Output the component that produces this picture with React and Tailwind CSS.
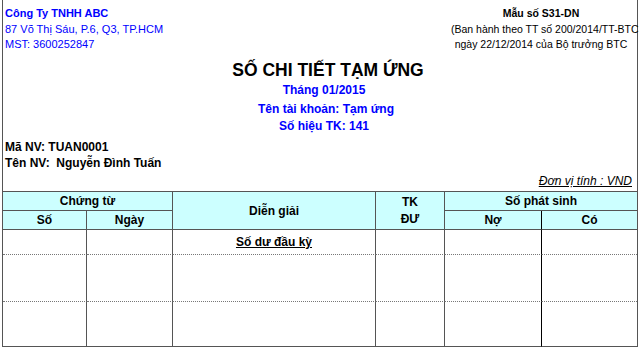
import React from "react";

const F = { fontFamily: '"Liberation Sans", Arial, sans-serif' };

export default function App() {
  const hc = "flex items-center justify-center text-center bg-[#ccffff] border-[#555] text-[12px] font-bold text-black";
  const bc = "border-[#555]";
  return (
    <div className="w-[640px] h-[347px] bg-white overflow-hidden" style={F}>
      <div className="ml-[2px] w-[636px] h-[347px] border-x border-[#555] flex flex-col">
        {/* top header */}
        <div className="flex justify-between pt-[5px]">
          <div className="pl-[2px] text-[#0000ff]">
            <div className="h-[17px] leading-[17px] text-[11px] font-bold">Công Ty TNHH ABC</div>
            <div className="h-[15px] leading-[15px] text-[11px]">87 Võ Thị Sáu, P.6, Q3, TP.HCM</div>
            <div className="h-[14px] leading-[14px] text-[11px]">MST: 3600252847</div>
          </div>
          <div className="w-[192px] text-center text-black">
            <div className="h-[17px] leading-[17px] text-[10.5px] font-bold">Mẫu số S31-DN</div>
            <div className="h-[15px] leading-[15px] text-[10.5px] pl-[6px] whitespace-nowrap">(Ban hành theo TT số 200/2014/TT-BTC</div>
            <div className="h-[14px] leading-[14px] text-[10.5px] whitespace-nowrap">ngày 22/12/2014 của Bộ trưởng BTC</div>
          </div>
        </div>
        <div className="mt-[9px] h-[21px] leading-[21px] text-center text-[17.5px] font-bold text-black pl-[16px]">SỐ CHI TIẾT TẠM ỨNG</div>
        <div className="h-[19px] leading-[19px] text-center text-[12px] font-bold text-[#0000ff] pl-[8px]">Tháng 01/2015</div>
        <div className="h-[18px] leading-[18px] text-center text-[12px] font-bold text-[#0000ff] pl-[12px]">Tên tài khoản: Tạm ứng</div>
        <div className="h-[17px] leading-[17px] text-center text-[12px] font-bold text-[#0000ff] pl-[8px]">Số hiệu TK: 141</div>
        <div className="mt-[4px] h-[16px] leading-[16px] pl-[2px] text-[12px] font-bold text-black">Mã NV: TUAN0001</div>
        <div className="h-[16px] leading-[16px] pl-[2px] text-[12px] font-bold text-black whitespace-pre">{"Tên NV:  Nguyễn Đình Tuấn"}</div>
        <div className="h-[20px] leading-[20px] flex justify-end pr-[5px]">
          <span className="text-[12px] italic underline text-black">Đơn vị tính : VND</span>
        </div>
        {/* table */}
        <div className="grid grid-cols-[84px_86px_203px_69px_97px_95px] grid-rows-[19px_19px_25px_47px_45px] border-t border-[#555]">
          <div className={`${hc} col-span-2 border-r border-b`}>Chứng từ</div>
          <div className={`${hc} row-span-2 border-r border-b`}>Diễn giải</div>
          <div className={`${hc} row-span-2 border-r border-b leading-[17px] flex-col`}>
            <span>TK</span>
            <span>ĐƯ</span>
          </div>
          <div className={`${hc} col-span-2 border-b`}>Số phát sinh</div>
          <div className={`${hc} border-r border-b`}>Số</div>
          <div className={`${hc} border-r border-b`}>Ngày</div>
          <div className={`${hc} border-r border-b border-r-black`}>Nợ</div>
          <div className={`${hc} border-b`}>Có</div>

          <div className={`${bc} border-r border-b border-b-[#777] border-dotted border-r-solid`} style={{borderRightStyle: "solid"}}></div>
          <div className={`${bc} border-r border-b border-b-[#777] border-dotted`} style={{borderRightStyle: "solid"}}></div>
          <div className={`${bc} border-r border-b border-b-[#777] border-dotted flex items-center justify-center`} style={{borderRightStyle: "solid"}}>
            <span className="text-[12px] font-bold underline text-black">Số dư đầu kỳ</span>
          </div>
          <div className={`${bc} border-r border-b border-b-[#777] border-dotted`} style={{borderRightStyle: "solid"}}></div>
          <div className={`border-r border-r-black border-b border-b-[#777] border-dotted`} style={{borderRightStyle: "solid"}}></div>
          <div className={`border-b border-b-[#777] border-dotted`}></div>

          <div className={`${bc} border-r border-b border-b-[#777] border-dotted`} style={{borderRightStyle: "solid"}}></div>
          <div className={`${bc} border-r border-b border-b-[#777] border-dotted`} style={{borderRightStyle: "solid"}}></div>
          <div className={`${bc} border-r border-b border-b-[#777] border-dotted`} style={{borderRightStyle: "solid"}}></div>
          <div className={`${bc} border-r border-b border-b-[#777] border-dotted`} style={{borderRightStyle: "solid"}}></div>
          <div className={`border-r border-r-black border-b border-b-[#777] border-dotted`} style={{borderRightStyle: "solid"}}></div>
          <div className={`border-b border-b-[#777] border-dotted`}></div>

          <div className={`${bc} border-r border-b`}></div>
          <div className={`${bc} border-r border-b`}></div>
          <div className={`${bc} border-r border-b`}></div>
          <div className={`${bc} border-r border-b`}></div>
          <div className={`border-r border-r-black border-b border-b-[#555]`}></div>
          <div className={`border-b border-[#555]`}></div>
        </div>
      </div>
    </div>
  );
}
